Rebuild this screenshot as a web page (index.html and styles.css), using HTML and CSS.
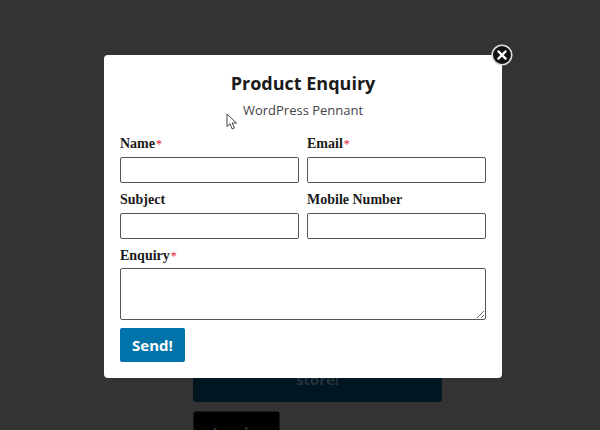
FILE: index.html
```html
<!DOCTYPE html>
<html lang="en">

<head>
  <meta charset="UTF-8">
  <meta name="viewport" content="width=device-width, initial-scale=1.0">
  <title>Product Enquiry</title>
  <link rel="stylesheet" href="styles.css">
</head>

<body>
  <div class="page">
    <a href="#" class="store-btn">store!</a>
    <a href="#" class="login-btn">Login</a>
  </div>

  <div class="modal">
    <button class="close-btn" aria-label="Close">
      <svg width="22" height="22" viewBox="0 0 22 22">
        <circle cx="11" cy="11" r="9.8" fill="#111" stroke="#ddd" stroke-width="1.6"/>
        <path d="M7.4 7.4L14.6 14.6M14.6 7.4L7.4 14.6" stroke="#fff" stroke-width="2.2" stroke-linecap="round"/>
      </svg>
    </button>

    <h2>Product Enquiry</h2>
    <p class="product-name">WordPress Pennant</p>

    <form class="enquiry-form">
      <div class="field">
        <label>Name<span class="req">*</span></label>
        <input type="text">
      </div>
      <div class="field">
        <label>Email<span class="req">*</span></label>
        <input type="text">
      </div>
      <div class="field">
        <label>Subject</label>
        <input type="text">
      </div>
      <div class="field">
        <label>Mobile Number</label>
        <input type="text">
      </div>
      <div class="field wide">
        <label class="tight">Enquiry<span class="req">*</span></label>
        <textarea></textarea>
      </div>
      <div class="wide">
        <button type="button" class="send-btn">Send!</button>
      </div>
    </form>

    <svg class="cursor" width="12" height="18" viewBox="0 0 12 18">
      <path d="M1 1L1 13.5L4 10.8L6.2 16L8.4 15L6.2 10L10.5 10Z" fill="#fff" stroke="#444" stroke-width="1"/>
    </svg>
  </div>
</body>

</html>
```

FILE: styles.css
```css
html, body {
  height: 100%;
}

body {
  margin: 0;
  overflow: hidden;
  background: #333;
  font-family: "Open Sans", sans-serif;
}

.page {
  display: flex;
  flex-direction: column;
  align-items: flex-start;
  padding: 350px 0 0 193px;
}

.store-btn {
  width: 249px;
  height: 52px;
  box-sizing: border-box;
  padding-top: 19px;
  background: #001722;
  border-radius: 3px;
  color: #25333b;
  font-size: 15px;
  font-weight: 700;
  text-align: center;
  text-decoration: none;
}

.login-btn {
  width: 87px;
  height: 40px;
  box-sizing: border-box;
  margin-top: 9px;
  padding-top: 10px;
  background: #000;
  border: 1px dotted #333;
  border-radius: 3px;
  color: #333;
  font-size: 18px;
  font-weight: 700;
  text-align: center;
  text-decoration: none;
}

.modal {
  position: absolute;
  left: 104px;
  top: 55px;
  width: 398px;
  height: 323px;
  box-sizing: border-box;
  padding: 15px 16px 0;
  background: #fff;
  border-radius: 4px;
}

.close-btn {
  position: absolute;
  right: -11px;
  top: -11px;
  width: 22px;
  height: 22px;
  padding: 0;
  border: none;
  background: none;
}

.cursor {
  position: absolute;
  left: 122px;
  top: 58px;
}

h2 {
  margin: 0;
  font-size: 18px;
  line-height: 27px;
  font-weight: 700;
  color: #1a1a1a;
  text-align: center;
}

.product-name {
  margin: 4px 0 0;
  font-size: 13px;
  line-height: 19px;
  color: #444;
  text-align: center;
}

.enquiry-form {
  display: grid;
  grid-template-columns: 179px 179px;
  column-gap: 8px;
  row-gap: 8px;
  margin-top: 15px;
}

.field {
  display: flex;
  flex-direction: column;
}

.wide {
  grid-column: 1 / 3;
}

label {
  font-family: "Liberation Serif", serif;
  font-size: 14px;
  line-height: 17px;
  font-weight: 700;
  color: #1a1a1a;
  margin-bottom: 5px;
}

label.tight {
  margin-bottom: 4px;
}

.req {
  color: #e8112d;
  font-size: 12px;
  line-height: 0;
  font-weight: 400;
  margin-left: 1px;
}

input, textarea {
  display: block;
  box-sizing: border-box;
  width: 100%;
  margin: 0;
  border: 1px solid #555;
  border-radius: 2px;
  background: #fff;
}

input {
  height: 26px;
}

textarea {
  height: 52px;
}

.send-btn {
  display: block;
  width: 65px;
  height: 34px;
  padding: 0;
  border: none;
  border-radius: 2px;
  background: #0073aa;
  color: #fff;
  font-family: "Open Sans", sans-serif;
  font-size: 15px;
  font-weight: 700;
}
```
